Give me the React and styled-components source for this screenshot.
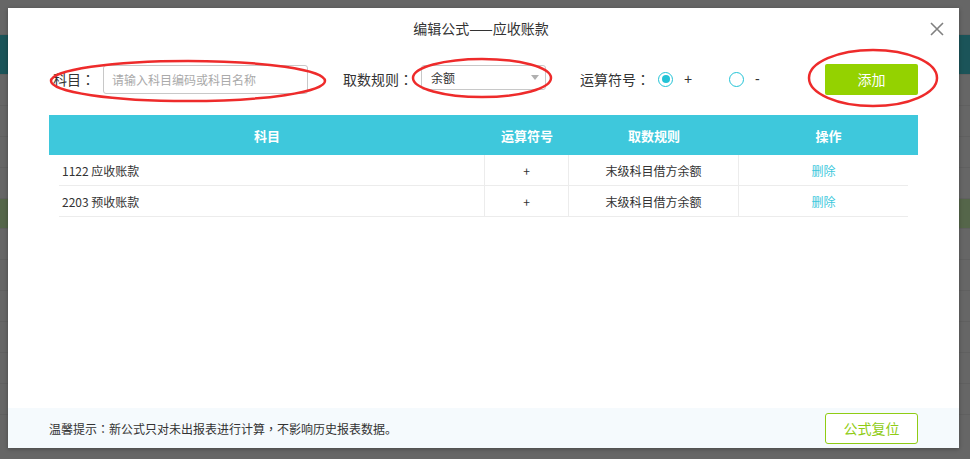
import React from "react";
import styled, { createGlobalStyle } from "styled-components";

const GlobalStyle = createGlobalStyle`
  html, body {
    margin: 0;
    padding: 0;
    width: 970px;
    height: 459px;
    overflow: hidden;
  }
  body {
    font-family: "Noto Sans CJK SC", "Noto Sans", sans-serif;
    color: #333;
  }
`;

const rows = [
  { code: "1122 应收账款", op: "+", rule: "末级科目借方余额" },
  { code: "2203 预收账款", op: "+", rule: "末级科目借方余额" },
];

export default function App() {
  return (
    <>
      <GlobalStyle />
      <Page>
        <Backdrop>
          <BackRow $h={35} />
          <BackRow $h={40} $bg="#1b5459" />
          <BackRow $h={31} />
          <BackRow $h={31} />
          <BackRow $h={31} />
          <BackRow $h={31} />
          <BackRow $h={30} $bg="#55664a" />
          <BackRow $h={31} />
          <BackRow $h={31} />
          <BackRow $h={31} />
          <BackRow $h={31} />
          <BackRow $h={31} />
          <BackRow $h={31} />
        </Backdrop>

        <Modal>
          <Title>
            编辑公式——应收账款
            <Close aria-label="close">
              <svg width="14" height="14" viewBox="0 0 14 14">
                <path d="M1 1 L13 13 M13 1 L1 13" stroke="#808080" strokeWidth="1.6" fill="none" />
              </svg>
            </Close>
          </Title>

          <Body>
            <FormRow>
              <Label $ml={4}>科目<Punct>：</Punct></Label>
              <Input placeholder="请输入科目编码或科目名称" />
              <Label $ml={35}>取数规则<Punct>：</Punct></Label>
              <Select>
                余额
                <Caret />
              </Select>
              <Label $ml={34}>运算符号<Punct>：</Punct></Label>
              <Radio $checked />
              <RadioText>+</RadioText>
              <Radio />
              <RadioText>-</RadioText>
              <AddButton>添加</AddButton>
            </FormRow>

            <Table>
              <HeadRow>
                <HeadCell>科目</HeadCell>
                <HeadCell>运算符号</HeadCell>
                <HeadCell>取数规则</HeadCell>
                <HeadCell>操作</HeadCell>
              </HeadRow>
              {rows.map((r) => (
                <BodyRow key={r.code}>
                  <Cell $left>{r.code}</Cell>
                  <Cell>{r.op}</Cell>
                  <Cell>{r.rule}</Cell>
                  <Cell>
                    <DeleteLink>删除</DeleteLink>
                  </Cell>
                </BodyRow>
              ))}
            </Table>
          </Body>

          <Footer>
            <Tip>
              温馨提示<Punct>：</Punct>新公式只对未出报表进行计算<Punct>，</Punct>不影响历史报表数据。
            </Tip>
            <ResetButton>公式复位</ResetButton>
          </Footer>
        </Modal>

        <Marks width="970" height="459" viewBox="0 0 970 459">
          <ellipse cx="188" cy="81" rx="137" ry="20" />
          <ellipse cx="482" cy="78" rx="69" ry="19" />
          <ellipse cx="873" cy="78" rx="64" ry="28" />
        </Marks>
      </Page>
    </>
  );
}

const Page = styled.div`
  position: relative;
  width: 970px;
  height: 459px;
  background: #666;
  overflow: hidden;
`;

const Backdrop = styled.div`
  display: flex;
  flex-direction: column;
`;

const BackRow = styled.div`
  height: ${(p) => p.$h}px;
  background: ${(p) => p.$bg || "#666"};
  border-bottom: 1px solid #606060;
  box-sizing: border-box;
`;

const Modal = styled.div`
  position: absolute;
  left: 8px;
  top: 8px;
  width: 951px;
  height: 440px;
  background: #fff;
  box-shadow: 0 1px 4px rgba(0, 0, 0, 0.3);
  display: flex;
  flex-direction: column;
`;

const Title = styled.div`
  position: relative;
  height: 40px;
  line-height: 40px;
  text-align: center;
  font-size: 14px;
  color: #333;
  padding-right: 5px;
`;

const Close = styled.span`
  position: absolute;
  right: 15px;
  top: 14px;
  width: 14px;
  height: 14px;
  display: flex;
`;

const Body = styled.div`
  flex: 1;
  padding: 15px 41px 0;
`;

const FormRow = styled.div`
  display: flex;
  align-items: center;
  height: 32px;
  margin-bottom: 20px;
`;

const Label = styled.span`
  font-size: 14px;
  color: #333;
  margin-left: ${(p) => p.$ml || 0}px;
  white-space: nowrap;
`;

const Punct = styled.span`
  font-family: "Noto Sans CJK TC", "Noto Sans CJK SC", sans-serif;
`;

const Input = styled.input`
  width: 205px;
  height: 29px;
  box-sizing: border-box;
  margin-left: 8px;
  border: 1px solid #c8c8c8;
  border-radius: 3px;
  padding: 0 8px;
  font-family: inherit;
  font-size: 12px;
  outline: none;
  &::placeholder {
    color: #aaa;
  }
`;

const Select = styled.div`
  position: relative;
  width: 125px;
  height: 25px;
  box-sizing: border-box;
  margin-left: 8px;
  margin-top: -4px;
  border: 1px solid #c8c8c8;
  border-radius: 3px;
  padding: 0 9px;
  font-size: 12px;
  line-height: 23px;
  color: #333;
`;

const Caret = styled.span`
  position: absolute;
  right: 6px;
  top: 9px;
  width: 0;
  height: 0;
  border-left: 4px solid transparent;
  border-right: 4px solid transparent;
  border-top: 5px solid #b0b0b0;
`;

const Radio = styled.span`
  width: 15px;
  height: 15px;
  box-sizing: border-box;
  border-radius: 50%;
  border: 1.5px solid #22c3d6;
  margin-left: 8px;
  display: flex;
  align-items: center;
  justify-content: center;
  &::after {
    content: "";
    width: 8px;
    height: 8px;
    border-radius: 50%;
    background: ${(p) => (p.$checked ? "#22c3d6" : "transparent")};
  }
`;

const RadioText = styled.span`
  font-family: "Liberation Sans", Arial, sans-serif;
  font-size: 14px;
  color: #333;
  width: 48px;
  padding-left: 11px;
  box-sizing: border-box;
`;

const AddButton = styled.button`
  margin-left: auto;
  width: 93px;
  height: 31px;
  border: none;
  border-radius: 2px;
  background: #94d200;
  color: #fff;
  font-family: inherit;
  font-size: 14px;
  padding: 0;
`;

const Table = styled.div`
  width: 869px;
`;

const HeadRow = styled.div`
  display: grid;
  grid-template-columns: 436px 84px 170px 179px;
  height: 40px;
  background: #3ec8dc;
`;

const HeadCell = styled.div`
  display: flex;
  align-items: center;
  justify-content: center;
  color: #fff;
  font-size: 13px;
  font-weight: bold;
`;

const BodyRow = styled.div`
  display: grid;
  grid-template-columns: 426px 84px 170px 169px;
  margin: 0 10px;
  height: 31px;
  border-bottom: 1px solid #ececec;
  box-sizing: border-box;
`;

const Cell = styled.div`
  display: flex;
  align-items: center;
  justify-content: ${(p) => (p.$left ? "flex-start" : "center")};
  padding-left: ${(p) => (p.$left ? "3px" : "0")};
  font-size: 12px;
  color: #333;
  border-right: 1px solid #ececec;
  &:last-child {
    border-right: none;
  }
`;

const DeleteLink = styled.span`
  color: #3ec8dc;
  cursor: pointer;
`;

const Footer = styled.div`
  height: 40px;
  background: #f5fafd;
  display: flex;
  align-items: center;
  justify-content: space-between;
  padding: 0 41px;
`;

const Tip = styled.span`
  font-size: 12px;
  color: #333;
`;

const ResetButton = styled.button`
  width: 93px;
  height: 31px;
  border: 1px solid #8fcc14;
  border-radius: 3px;
  background: #fff;
  color: #8fcc14;
  font-family: inherit;
  font-size: 14px;
  padding: 0;
`;

const Marks = styled.svg`
  position: absolute;
  left: 0;
  top: 0;
  pointer-events: none;
  ellipse {
    fill: none;
    stroke: #ee2b2b;
    stroke-width: 2.5;
  }
`;
